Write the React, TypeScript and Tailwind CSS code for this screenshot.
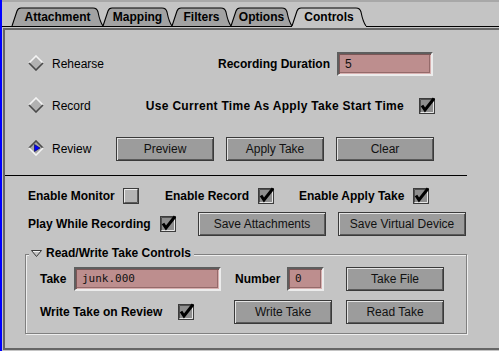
import React from 'react';

const tabs = [
  { label: 'Attachment', l: 12, r: 103 },
  { label: 'Mapping', l: 103, r: 172 },
  { label: 'Filters', l: 172, r: 231 },
  { label: 'Options', l: 231, r: 292 },
  { label: 'Controls', l: 292, r: 366, active: true },
];

const tabPath = (l: number, r: number) =>
  `M${l},26 L${l + 5},11 Q${l + 6},8 ${l + 9},8 L${r - 10},8 Q${r - 6},8 ${r - 5},12 Q${r - 3},22 ${r},26`;

const Diamond = ({ on }: { on?: boolean }) => (
  <svg width="16" height="16" viewBox="0 0 16 16" className="-mt-[3px] shrink-0">
    <polygon points="8,1 15,8 8,15 1,8" fill={on ? '#a6a6a6' : '#b2b2b2'} />
    <polyline points="1,8 8,1 15,8" fill="none" stroke={on ? '#4a4a4a' : '#f4f4f4'} strokeWidth="1.6" />
    <polyline points="1,8 8,15 15,8" fill="none" stroke={on ? '#f4f4f4' : '#4a4a4a'} strokeWidth="1.6" />
    {on && <polygon points="6.5,4.5 12,8 6.5,11.5" fill="#0000ff" stroke="#00004a" strokeWidth="0.6" />}
  </svg>
);

const Check = ({ on = true }: { on?: boolean }) => (
  <svg width="16" height="16" viewBox="0 0 16 16" className="shrink-0 overflow-visible">
    <rect x="0.5" y="0.5" width="15" height="15" fill={on ? '#8e8e8e' : '#b4b4b4'} stroke="#3c3c3c" />
    <polyline points="1.5,14.5 1.5,1.5 14.5,1.5" fill="none" stroke={on ? '#505050' : '#ececec'} />
    <polyline points="1.5,14.5 14.5,14.5 14.5,1.5" fill="none" stroke={on ? '#e6e6e6' : '#5a5a5a'} />
    {on && <polyline points="3,7.5 6,12 15,0.5" fill="none" stroke="#000" strokeWidth="3" />}
  </svg>
);

const Btn = ({ children, w }: { children: React.ReactNode; w: string }) => (
  <div
    className={`${w} h-[24px] shrink-0 flex items-center justify-center bg-[#9c9c9c] border border-[#3a3a3a] shadow-[inset_1px_1px_0_#e4e4e4,inset_-1px_-1px_0_#5a5a5a] text-[12px] text-[#111]`}
  >
    {children}
  </div>
);

const Field = ({ children, w, mono }: { children: React.ReactNode; w: string; mono?: boolean }) => (
  <div
    className={`${w} h-[24px] shrink-0 flex items-center pl-[6px] bg-[#bd8e8e] border-2 border-t-[#5e5e5e] border-l-[#5e5e5e] border-b-[#ececec] border-r-[#ececec] shadow-[inset_1px_1px_0_#7c5656,inset_-1px_-1px_0_#d8b0b0,inset_-2px_-2px_0_#946a6a] text-[#111] ${mono ? "font-['DejaVu_Sans_Mono',monospace] text-[11px]" : 'text-[12px]'}`}
  >
    {children}
  </div>
);

export default function App() {
  return (
    <div className="w-[499px] h-[351px] flex bg-[#c4c4c4] overflow-hidden font-['Liberation_Sans',Arial,sans-serif] text-black select-none">
      <div className="w-[2px] h-full bg-[#0000ff] shrink-0" />
      <div className="flex-1 flex flex-col">
        <div className="h-[2px] bg-[#a8a8a8]" />

        {/* tab strip */}
        <div className="relative h-[25px]">
          <svg className="absolute inset-0" width="497" height="25" viewBox="2 2 497 25">
            <line x1="2" y1="26.5" x2="292" y2="26.5" stroke="#000" />
            <line x1="366" y1="26.5" x2="499" y2="26.5" stroke="#000" />
            {tabs.map((t) => (
              <path
                key={t.label}
                d={tabPath(t.l, t.r)}
                fill={t.active ? '#c4c4c4' : '#a2a2a2'}
                stroke="#000"
                strokeWidth="1.1"
              />
            ))}
          </svg>
          <div className="relative flex h-full pl-[10px]">
            {tabs.map((t) => (
              <div
                key={t.label}
                style={{ width: t.r - t.l }}
                className="h-full flex items-center justify-center pt-[5px] text-[12px] font-bold"
              >
                {t.label}
              </div>
            ))}
          </div>
        </div>

        {/* panel */}
        <div className="mt-px ml-px h-[322px] border-t-2 border-l-2 border-b-2 border-[#666666] flex flex-col text-[12px]">
          <div className="mt-[22px] h-[24px] flex items-center pl-[23px]">
            <div className="w-[88px] flex items-center">
              <Diamond />
              <span className="ml-[8px]">Rehearse</span>
            </div>
            <div className="w-[317px] flex items-center justify-end">
              <span className="font-bold">Recording Duration</span>
              <div className="ml-[7px]">
                <Field w="w-[96px]">5</Field>
              </div>
            </div>
          </div>

          <div className="mt-[18px] h-[24px] flex items-center pl-[23px]">
            <div className="w-[88px] flex items-center">
              <Diamond />
              <span className="ml-[8px]">Record</span>
            </div>
            <div className="w-[319px] flex items-center justify-end">
              <span className="font-bold tracking-[0.3px]">Use Current Time As Apply Take Start Time</span>
              <div className="ml-[15px] flex">
                <Check />
              </div>
            </div>
          </div>

          <div className="mt-[19px] h-[24px] flex items-center pl-[23px]">
            <div className="w-[88px] flex items-center">
              <Diamond on />
              <span className="ml-[8px]">Review</span>
            </div>
            <div className="flex items-center gap-[12px]">
              <Btn w="w-[98px]">Preview</Btn>
              <Btn w="w-[98px]">Apply Take</Btn>
              <Btn w="w-[98px]">Clear</Btn>
            </div>
          </div>

          <div className="mt-[14px] h-px w-[462px] bg-black" />

          <div className="mt-[8px] h-[24px] flex items-center pl-[23px] font-bold">
            <div className="w-[137px] flex items-center">
              <span>Enable Monitor</span>
              <div className="ml-[8px] flex">
                <Check on={false} />
              </div>
            </div>
            <div className="w-[134px] flex items-center">
              <span>Enable Record</span>
              <div className="ml-[9px] flex">
                <Check />
              </div>
            </div>
            <div className="flex items-center">
              <span>Enable Apply Take</span>
              <div className="ml-[9px] flex">
                <Check />
              </div>
            </div>
          </div>

          <div className="mt-[4px] h-[24px] flex items-center pl-[23px]">
            <div className="w-[170px] flex items-center font-bold">
              <span>Play While Recording</span>
              <div className="ml-[9px] flex">
                <Check />
              </div>
            </div>
            <Btn w="w-[128px]">Save Attachments</Btn>
            <div className="ml-[12px]">
              <Btn w="w-[128px]">Save Virtual Device</Btn>
            </div>
          </div>

          {/* group box */}
          <div className="relative mt-[18px] ml-[20px] w-[442px] h-[80px] border border-[#808080] shadow-[inset_1px_1px_0_#eeeeee,1px_1px_0_#eeeeee] pl-[14px]">
            <div className="absolute left-[3px] -top-[9px] h-[14px] flex items-center bg-[#c4c4c4] pl-[2px] pr-[3px]">
              <svg width="11" height="7" viewBox="0 0 11 7">
                <polygon points="0.5,0.5 10.5,0.5 5.5,6.5" fill="#c4c4c4" stroke="#3a3a3a" />
                <polyline points="2,1.5 9,1.5" stroke="#f0f0f0" />
              </svg>
              <span className="ml-[4px] font-bold">Read/Write Take Controls</span>
            </div>

            <div className="mt-[12px] h-[24px] flex items-center">
              <div className="w-[34px] font-bold">Take</div>
              <Field w="w-[147px]" mono>
                junk.000
              </Field>
              <div className="ml-[14px] w-[52px] font-bold">Number</div>
              <Field w="w-[37px]" mono>
                0
              </Field>
              <div className="ml-[22px]">
                <Btn w="w-[98px]">Take File</Btn>
              </div>
            </div>

            <div className="mt-[9px] h-[24px] flex items-center">
              <div className="w-[138px] font-bold">Write Take on Review</div>
              <Check />
              <div className="ml-[40px]">
                <Btn w="w-[98px]">Write Take</Btn>
              </div>
              <div className="ml-[14px]">
                <Btn w="w-[98px]">Read Take</Btn>
              </div>
            </div>
          </div>
        </div>
      </div>
    </div>
  );
}
